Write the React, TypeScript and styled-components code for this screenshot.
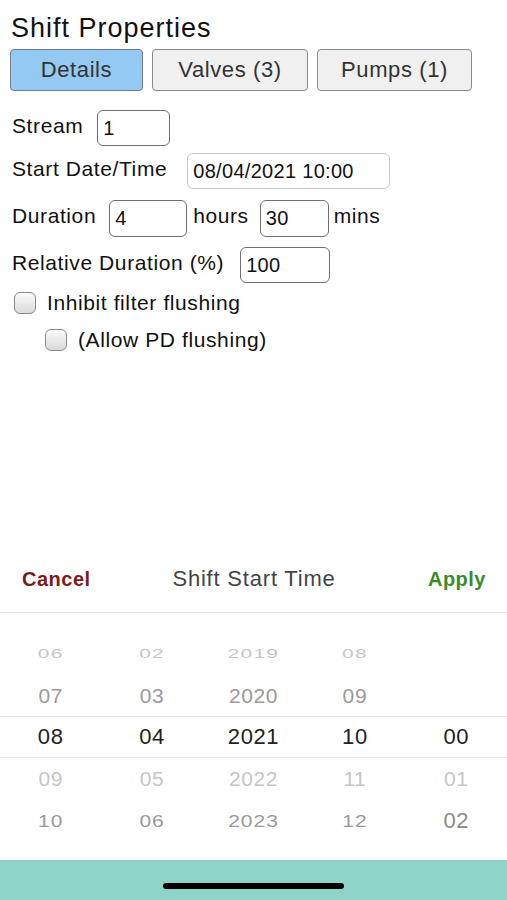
import React from "react";
import styled, { createGlobalStyle } from "styled-components";

const Global = createGlobalStyle`
  html, body { margin: 0; padding: 0; background: #fff; }
  body { font-family: "Liberation Sans", Arial, sans-serif; }
  * { box-sizing: border-box; }
`;

const Page = styled.div`
  width: 507px;
  height: 900px;
  display: flex;
  flex-direction: column;
  overflow: hidden;
  background: #fff;
`;

const Form = styled.div`
  flex: 1;
  padding: 12px 10px 0 10px;
  display: flex;
  flex-direction: column;
`;

const Title = styled.h1`
  margin: 0 0 0 1px;
  font-size: 27px;
  line-height: 32px;
  font-weight: 400;
  letter-spacing: 1px;
  color: #111;
`;

const Tabs = styled.div`
  display: flex;
  gap: 9px;
  margin-top: 5px;
`;

const Tab = styled.button<{ $w: number; $active?: boolean }>`
  width: ${(p) => p.$w}px;
  height: 42px;
  border-radius: 4px;
  border: 1px solid ${(p) => (p.$active ? "#6d7f8f" : "#8a8a8a")};
  background: ${(p) => (p.$active ? "#94c9f3" : "#f0f0f0")};
  color: #333;
  font-family: "Liberation Sans", Arial, sans-serif;
  font-size: 22px;
  letter-spacing: 0.6px;
  padding: 0;
  display: flex;
  align-items: center;
  justify-content: center;
`;

const Fields = styled.div`
  display: flex;
  flex-direction: column;
  margin-top: 19px;
  padding-left: 2px;
`;

const Row = styled.div<{ $mt?: number; $h?: number }>`
  display: flex;
  align-items: center;
  height: ${(p) => p.$h ?? 36}px;
  margin-top: ${(p) => p.$mt ?? 0}px;
`;

const Label = styled.span<{ $ml?: number; $lift?: number }>`
  font-size: 21px;
  letter-spacing: 0.6px;
  color: #111;
  margin-left: ${(p) => p.$ml ?? 0}px;
  margin-bottom: ${(p) => p.$lift ?? 5}px;
  white-space: nowrap;
`;

const Input = styled.div<{ $w: number; $ml: number; $light?: boolean; $h?: number }>`
  width: ${(p) => p.$w}px;
  height: ${(p) => p.$h ?? 36}px;
  margin-left: ${(p) => p.$ml}px;
  border: 1px solid ${(p) => (p.$light ? "#c9c9c9" : "#6f6f6f")};
  border-radius: 6px;
  display: flex;
  align-items: center;
  padding-left: 5px;
  font-size: 20px;
  letter-spacing: 0.3px;
  color: #111;
  background: #fff;
`;

const Check = styled.span<{ $ml: number }>`
  width: 22px;
  height: 22px;
  margin-left: ${(p) => p.$ml}px;
  border: 1px solid #8a8a8a;
  border-radius: 6px;
  background: linear-gradient(#fbfbfb, #d9d9d9);
  flex-shrink: 0;
`;

const Sheet = styled.div`
  display: flex;
  flex-direction: column;
`;

const SheetHeader = styled.div`
  height: 67px;
  border-bottom: 1px solid #e8e8e8;
  display: grid;
  grid-template-columns: 1fr auto 1fr;
  align-items: center;
  padding: 0 21px 0 22px;
`;

const HeaderAction = styled.span<{ $color: string; $right?: boolean }>`
  font-size: 20px;
  font-weight: 700;
  letter-spacing: 0.5px;
  color: ${(p) => p.$color};
  justify-self: ${(p) => (p.$right ? "end" : "start")};
`;

const HeaderTitle = styled.span`
  font-size: 22px;
  letter-spacing: 0.8px;
  color: #444;
`;

const Wheel = styled.div`
  padding: 19px 0 18px;
  display: flex;
  flex-direction: column;
`;

const WheelRow = styled.div<{ $selected?: boolean }>`
  display: grid;
  grid-template-columns: repeat(5, 1fr);
  height: 42px;
  align-items: center;
  border-top: ${(p) => (p.$selected ? "1px solid #e8e8e8" : "none")};
  border-bottom: ${(p) => (p.$selected ? "1px solid #e8e8e8" : "none")};
`;

const WheelCell = styled.span<{ $color: string; $size: number; $sy: number; $ls: number }>`
  text-align: center;
  font-size: ${(p) => p.$size}px;
  color: ${(p) => p.$color};
  letter-spacing: ${(p) => p.$ls}px;
  transform: scaleY(${(p) => p.$sy});
  line-height: 1;
`;

const HomeBar = styled.div`
  height: 40px;
  background: #8ed4c9;
  display: flex;
  justify-content: center;
  padding-top: 23px;
`;

const Indicator = styled.div`
  width: 181px;
  height: 6px;
  border-radius: 3px;
  background: #000;
`;

const columns = [
  ["06", "07", "08", "09", "10"],
  ["02", "03", "04", "05", "06"],
  ["2019", "2020", "2021", "2022", "2023"],
  ["08", "09", "10", "11", "12"],
  ["", "", "00", "01", "02"],
];

const rowStyle = [
  { color: "#c6c6c6", size: 21, sy: 0.62, ls: 1.2 },
  { color: "#9a9a9a", size: 21, sy: 1, ls: 0.6 },
  { color: "#222", size: 22, sy: 1, ls: 0.6 },
  { color: "#c6c6c6", size: 21, sy: 0.92, ls: 0.6 },
  { color: "#9a9a9a", size: 21, sy: 0.78, ls: 1 },
];

export default function App() {
  return (
    <Page>
      <Global />
      <Form>
        <Title>Shift Properties</Title>
        <Tabs>
          <Tab $w={133} $active>Details</Tab>
          <Tab $w={156}>Valves (3)</Tab>
          <Tab $w={155}>Pumps (1)</Tab>
        </Tabs>
        <Fields>
          <Row>
            <Label>Stream</Label>
            <Input $w={73} $ml={14}>1</Input>
          </Row>
          <Row $mt={7}>
            <Label>Start Date/Time</Label>
            <Input $w={203} $ml={20} $light>08/04/2021 10:00</Input>
          </Row>
          <Row $mt={11} $h={37}>
            <Label>Duration</Label>
            <Input $w={78} $ml={13} $h={37}>4</Input>
            <Label $ml={6}>hours</Label>
            <Input $w={69} $ml={11} $h={37}>30</Input>
            <Label $ml={5}>mins</Label>
          </Row>
          <Row $mt={10}>
            <Label>Relative Duration (%)</Label>
            <Input $w={90} $ml={16}>100</Input>
          </Row>
          <Row $mt={7} $h={26}>
            <Check $ml={2} />
            <Label $ml={11} $lift={0}>Inhibit filter flushing</Label>
          </Row>
          <Row $mt={11} $h={26}>
            <Check $ml={33} />
            <Label $ml={11} $lift={0}>(Allow PD flushing)</Label>
          </Row>
        </Fields>
      </Form>
      <Sheet>
        <SheetHeader>
          <HeaderAction $color="#7b1c1c">Cancel</HeaderAction>
          <HeaderTitle>Shift Start Time</HeaderTitle>
          <HeaderAction $color="#3b8b2b" $right>Apply</HeaderAction>
        </SheetHeader>
        <Wheel>
          {rowStyle.map((s, r) => (
            <WheelRow key={r} $selected={r === 2}>
              {columns.map((col, c) => {
                const special = r === 4 && c === 4;
                return (
                  <WheelCell
                    key={c}
                    $color={special ? "#8c8c8c" : s.color}
                    $size={special ? 22 : s.size}
                    $sy={special ? 1 : s.sy}
                    $ls={special ? 0.6 : s.ls}
                  >
                    {col[r]}
                  </WheelCell>
                );
              })}
            </WheelRow>
          ))}
        </Wheel>
      </Sheet>
      <HomeBar>
        <Indicator />
      </HomeBar>
    </Page>
  );
}
